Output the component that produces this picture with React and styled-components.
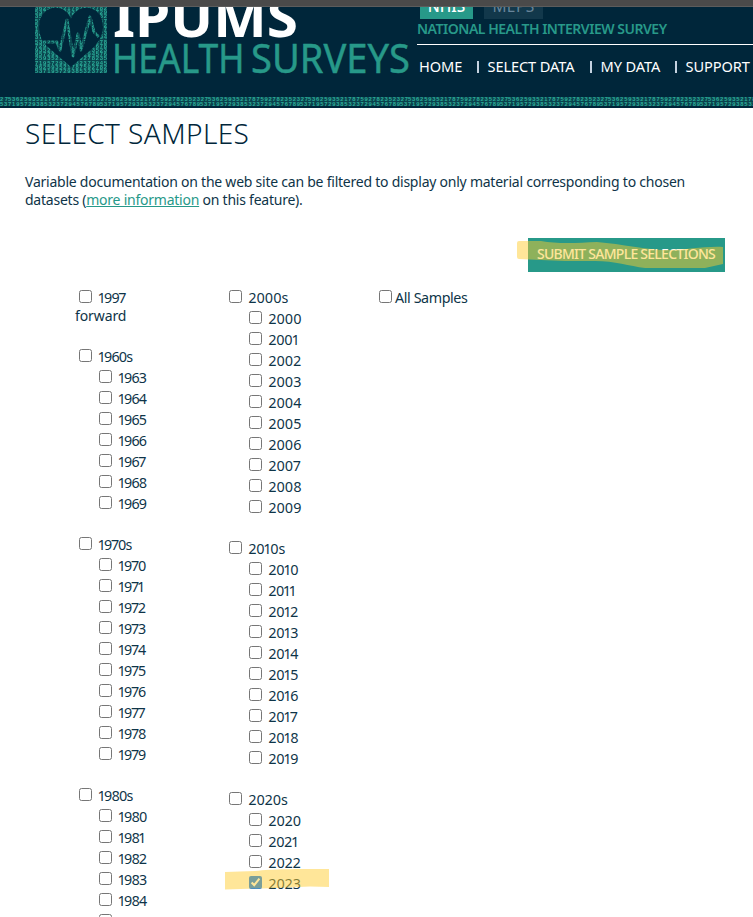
import React from 'react';
import styled, { createGlobalStyle } from 'styled-components';

const Global = createGlobalStyle`
  * { box-sizing: border-box; }
  body { margin: 0; background: #fff; overflow: hidden; }
`;

const Page = styled.div`
  width: 753px;
  height: 917px;
  overflow: hidden;
  background: #fff;
  color: #0e3448;
  font: 400 14px/18px "Noto Sans", "Open Sans", sans-serif;
`;
const Chrome = styled.div`
  height: 7px;
  background: #4a4a4a;
  border-bottom: 1px solid #5c5c5c;
`;
const Header = styled.header`
  height: 101px;
  background: #00263a;
  display: flex;
  flex-direction: column;
  justify-content: space-between;
`;
const HeaderMain = styled.div`
  display: flex;
  height: 84px;
`;
const Brand = styled.svg`
  display: block;
  flex: none;
  width: 417px;
  height: 80px;
`;
const HeaderSide = styled.div`
  flex: 1;
  min-width: 0;
`;
const Tabs = styled.div`
  display: flex;
  gap: 11px;
  height: 12px;
  padding-left: 3px;
  overflow: hidden;
`;
const Tab = styled.span`
  display: flex;
  justify-content: center;
  align-items: flex-end;
  width: ${p => p.$width}px;
  height: 12px;
  padding-bottom: 3px;
  font-size: 15.5px;
  line-height: 20px;
  font-weight: ${p => (p.$active ? 500 : 400)};
  letter-spacing: ${p => (p.$active ? 0 : 0.4)}px;
  color: ${p => (p.$active ? '#fff' : '#68859a')};
  background: ${p => (p.$active ? '#279989' : '#12384b')};
`;
const Survey = styled.div`
  height: 26px;
  padding-top: 1px;
  font-size: 14px;
  font-weight: 600;
  letter-spacing: -0.48px;
  white-space: nowrap;
  color: #279989;
  border-bottom: 1px solid #fff;
`;
const Nav = styled.nav`
  display: flex;
  padding: 12px 0 0 2px;
  font-size: 14.6px;
  letter-spacing: -0.1px;
  white-space: nowrap;
  color: #fff;
`;
const NavItem = styled.a`
  width: ${p => p.$width}px;
  flex: none;
`;
const Divider = styled.i`
  flex: none;
  width: 2px;
  height: 12px;
  margin: 4px 9px 0 0;
  background: #c4d2e0;
`;
const Band = styled.svg`
  display: block;
  width: 753px;
  height: 12px;
`;
const Title = styled.h1`
  margin: 9px 0 0 25px;
  height: 33px;
  font-size: 28px;
  line-height: 32px;
  font-weight: 300;
  letter-spacing: 0.4px;
  color: #00263a;
`;
const Intro = styled.p`
  margin: 23px 0 0 25px;
  letter-spacing: -0.235px;
  white-space: nowrap;
`;
const Link = styled.a`
  color: #279989;
  text-decoration: underline;
`;
const Actions = styled.div`
  display: flex;
  justify-content: flex-end;
  padding: 29px 28px 0 0;
`;
const Submit = styled.button`
  position: relative;
  width: 197px;
  height: 34px;
  padding: 0 1px 2px 0;
  border: 0;
  background: #279989;
  color: #fff;
  font: 500 14px/20px "Noto Sans", sans-serif;
  letter-spacing: -0.74px;
  white-space: nowrap;
`;
const Marker = styled.svg`
  position: absolute;
  left: ${p => p.$left}px;
  top: ${p => p.$top}px;
  overflow: visible;
  pointer-events: none;
  fill: rgba(255, 203, 42, 0.48);
`;
const Columns = styled.div`
  display: grid;
  grid-template-columns: 150px 150px 150px;
  padding: 14px 0 0 75px;
`;
const Group = styled.section`
  margin-bottom: 20px;
`;
const Row = styled.label`
  position: relative;
  display: flex;
  height: 21px;
  padding-left: ${p => (p.$child ? 24 : 4)}px;
  gap: ${p => p.$gap ?? 6.5}px;
  font-size: 14.3px;
  line-height: 21px;
  letter-spacing: ${p => p.$track ?? 0}px;
  font-feature-settings: "pnum";
  white-space: nowrap;
`;
const Box = styled.input`
  flex: none;
  width: 13px;
  height: 13px;
  margin: 4px 0 0;
`;
const Caption = styled.span`
  padding-top: 1px;
`;
const Wrapped = styled.div`
  margin-bottom: 20px;
  height: 18px;
  font-size: 14px;
  letter-spacing: -0.1px;
`;

const ROW_A = '5362593521787592782352327';
const ROW_B = '5371957293853237294576789';

function Digits({ x, y, text, length }) {
  return (
    <text x={x} y={y} textLength={length} lengthAdjust="spacing"
      fontFamily="Liberation Sans, sans-serif" fontWeight="700" fontSize="5.8" fill="#2cae9a">
      {text}
    </text>
  );
}

function Word({ x, y, width, size, fill, weight, children }) {
  return (
    <text x={x} y={y} textLength={width} lengthAdjust="spacingAndGlyphs"
      fontFamily="Noto Sans, sans-serif" fontWeight={weight} fontSize={size} fill={fill}>
      {children}
    </text>
  );
}

function Logo() {
  return (
    <Brand viewBox="0 7 417 80">
      <defs>
        <mask id="heart">
          <rect x="35" y="0" width="73" height="74" fill="#fff" />
          <path fill="#000" d="M71 67 L49 48 C42 42 39 35 39 27 C39 4 65 2 71 19 C77 2 103 4 103 27 C103 35 99 42 93 48 Z" />
          <path fill="none" stroke="#fff" strokeWidth="3" strokeLinejoin="round"
            d="M39 42 H57 L60 50 L67 20 L73 56 L78 34 L81 50 L90 17 L94 32 L99 37" />
        </mask>
      </defs>
      <g mask="url(#heart)">
        <rect x="35" y="0" width="72" height="73" fill="#279989" opacity="0.28" />
        {Array.from({ length: 16 }, (_, i) => (
          <Digits key={i} x={35} y={73 - i * 4.2} length={72} text={(i % 2 ? ROW_A : ROW_B).slice(i % 7, (i % 7) + 18)} />
        ))}
      </g>
      <Word x={113} y={37} width={185} size={53} weight={700} fill="#fff">IPUMS</Word>
      <g stroke="#279989" strokeWidth="0.5">
        <Word x={112} y={73} width={132.5} size={40.5} weight={400} fill="#279989">HEALTH</Word>
        <Word x={251} y={73} width={159} size={40.5} weight={400} fill="#279989">SURVEYS</Word>
      </g>
    </Brand>
  );
}

function digitTrack(label) {
  if (label.startsWith('1')) return -0.8;
  return -0.25 * label.split('1').length + 0.25;
}

function Option({ label, child, checked, gap, track }) {
  return (
    <Row $child={child} $gap={gap} $track={track ?? digitTrack(label)}>
      <Box type="checkbox" defaultChecked={checked} />
      <Caption>{label}</Caption>
      {checked && (
        <Marker $left={0} $top={-3} width="105" height="21">
          <path d="M0 3 L30 2 C48 0 70 0 104 0 V18 L85 17.500 L50 19 L0 20.500 Z" />
        </Marker>
      )}
    </Row>
  );
}

function Decade({ start, from = 0, to = 9, selected }) {
  const years = Array.from({ length: to - from + 1 }, (_, i) => start + from + i);
  return (
    <Group>
      <Option label={`${start}s`} />
      {years.map(y => <Option key={y} label={`${y}`} child checked={y === selected} />)}
    </Group>
  );
}

export default function App() {
  return (
    <Page>
      <Global />
      <Chrome />
      <Header>
        <HeaderMain>
          <Logo />
          <HeaderSide>
            <Tabs>
              <Tab $active $width={53}>NHIS</Tab>
              <Tab $width={59}>MEPS</Tab>
            </Tabs>
            <Survey>NATIONAL HEALTH INTERVIEW SURVEY</Survey>
            <Nav>
              <NavItem $width={57.5}>HOME</NavItem>
              <Divider />
              <NavItem $width={102}>SELECT DATA</NavItem>
              <Divider />
              <NavItem $width={74}>MY DATA</NavItem>
              <Divider />
              <NavItem $width={66}>SUPPORT</NavItem>
            </Nav>
          </HeaderSide>
        </HeaderMain>
        <Band>
          <rect y="1" width="753" height="9" fill="#279989" opacity="0.25" />
          <Digits x={0} y={5.3} length={8} text="27" />
          {Array.from({ length: 8 }, (_, i) => (
            <React.Fragment key={i}>
              <Digits x={8 + i * 100} y={5.3} length={100} text={ROW_A} />
              <Digits x={i * 100} y={10} length={100} text={ROW_B} />
            </React.Fragment>
          ))}
        </Band>
      </Header>
      <Title>SELECT SAMPLES</Title>
      <Intro>
        Variable documentation on the web site can be filtered to display only material corresponding to chosen<br />
        datasets (<Link>more information</Link> on this feature).
      </Intro>
      <Actions>
        <Submit>
          SUBMIT SAMPLE SELECTIONS
          <Marker $left={-11} $top={3} width="208" height="28">
            <path d="M2 0 H24 C40 3 60 2 80 1 C105 3 130 9 150 9 C170 9 188 5 206 6 V23 L188 27 H128 C112 25 98 20 78 20 L48 20 L24 19 L2 18 Q0 18 0 16 V2 Q0 0 2 0 Z" />
          </Marker>
        </Submit>
      </Actions>
      <Columns>
        <div>
          <Option label="1997" />
          <Wrapped>forward</Wrapped>
          <Decade start={1960} from={3} />
          <Decade start={1970} />
          <Decade start={1980} />
        </div>
        <div>
          <Decade start={2000} />
          <Decade start={2010} />
          <Decade start={2020} to={3} selected={2023} />
        </div>
        <div>
          <Option label="All Samples" gap={3} track={-0.4} />
        </div>
      </Columns>
    </Page>
  );
}
